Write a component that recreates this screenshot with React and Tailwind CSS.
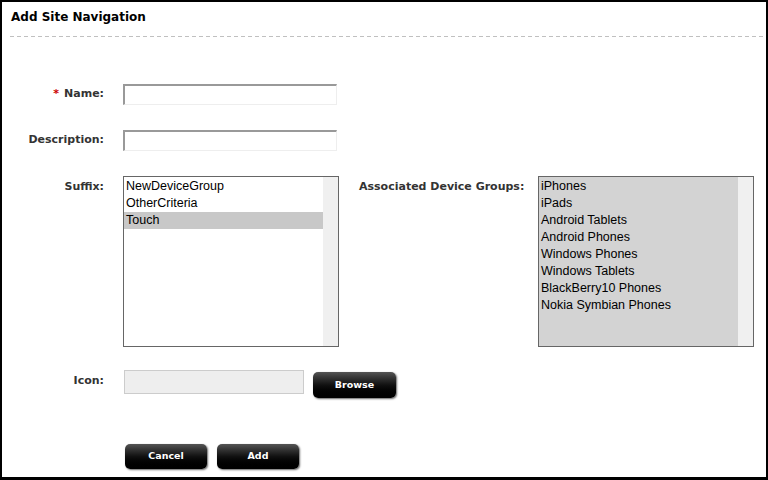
const SUFFIXES = ['NewDeviceGroup', 'OtherCriteria', 'Touch'];
const GROUPS = [
  'iPhones',
  'iPads',
  'Android Tablets',
  'Android Phones',
  'Windows Phones',
  'Windows Tablets',
  'BlackBerry10 Phones',
  'Nokia Symbian Phones',
];

const labelCls = "font-['DejaVu_Sans',Verdana,sans-serif] font-bold text-[11px] text-[#333] whitespace-nowrap";

function BlackButton({ children, className = '' }) {
  return (
    <button
      className={`h-[25px] w-[82px] rounded-[5px] bg-gradient-to-b from-[#555] via-[#111] to-black text-white text-[9.5px] font-bold font-['DejaVu_Sans',Verdana,sans-serif] shadow-[1px_1px_2px_rgba(0,0,0,0.6)] ${className}`}
    >
      {children}
    </button>
  );
}

function ListBox({ items, selected, allSelected, className = '' }) {
  return (
    <div className={`flex w-[216px] h-[171px] border border-[#666] ${allSelected ? 'bg-[#d3d3d3]' : 'bg-white'} ${className}`}>
      <div className="flex-1 pt-px font-['Liberation_Sans',Arial,sans-serif] text-[12.5px] text-black">
        {items.map(it => (
          <div
            key={it}
            className={`h-[17px] leading-[17px] pl-[2px] ${it === selected ? 'bg-[#c8c8c8]' : ''}`}
          >
            {it}
          </div>
        ))}
      </div>
      <div className="w-[15px] bg-[#f0f0f0]" />
    </div>
  );
}

export default function App() {
  return (
    <div className="w-[768px] h-[480px] bg-white border-t-2 border-x-2 border-b-[3px] border-black overflow-hidden">
      <div className="h-[34px] pl-[9px] pt-[6px] font-['DejaVu_Sans',Verdana,sans-serif] font-bold text-[12px] text-black">
        Add Site Navigation
      </div>
      <div className="ml-[8px] h-px bg-[repeating-linear-gradient(90deg,#c0c0c0_0_4px,transparent_4px_7px)]" />

      <div className="mt-[47px] flex flex-col">
        {/* Name */}
        <div className="flex items-center">
          <div className={`w-[102px] text-right ${labelCls}`}>
            <span className="text-[#c00] mr-[5px]">*</span>Name:
          </div>
          <input className="ml-[19px] w-[214px] h-[21px] border-t-2 border-l-2 border-r border-b border-t-[#999] border-l-[#999] border-r-[#eee] border-b-[#eee] outline-none" />
        </div>

        {/* Description */}
        <div className="mt-[25px] flex items-center">
          <div className={`w-[102px] text-right ${labelCls}`}>Description:</div>
          <input className="ml-[19px] w-[214px] h-[21px] border-t-2 border-l-2 border-r border-b border-t-[#999] border-l-[#999] border-r-[#eee] border-b-[#eee] outline-none" />
        </div>

        {/* Suffix + groups */}
        <div className="mt-[25px] flex items-start">
          <div className={`w-[102px] text-right pt-[3px] ${labelCls}`}>Suffix:</div>
          <ListBox items={SUFFIXES} selected="Touch" className="ml-[19px]" />
          <div className={`ml-[20px] w-[179px] pt-[3px] ${labelCls}`}>Associated Device Groups:</div>
          <ListBox items={GROUPS} allSelected />
        </div>

        {/* Icon */}
        <div className="mt-[23px] flex items-start">
          <div className={`w-[102px] text-right pt-[3px] ${labelCls}`}>Icon:</div>
          <div className="ml-[20px] w-[180px] h-[24px] bg-[#eee] border border-[#ccc]" />
          <BlackButton className="ml-[9px] mt-[2px] w-[83px] h-[26px]">Browse</BlackButton>
        </div>

        {/* Actions */}
        <div className="mt-[46px] flex pl-[123px] gap-[10px]">
          <BlackButton>Cancel</BlackButton>
          <BlackButton>Add</BlackButton>
        </div>
      </div>
    </div>
  );
}
